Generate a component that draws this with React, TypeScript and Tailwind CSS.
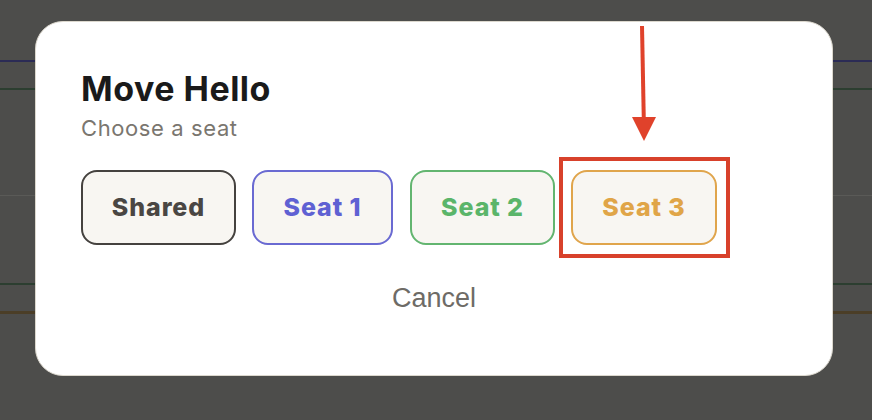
import React from "react";

const seats = [
  { label: "Shared", cls: "w-[155px] border-[#45423f] text-[#4a4643]" },
  { label: "Seat 1", cls: "w-[141px] border-[#6a6ad2] text-[#5f61d3]" },
  { label: "Seat 2", cls: "w-[145px] border-[#63b570] text-[#5bb56a]" },
];

export default function App() {
  return (
    <div className="relative w-[872px] h-[420px] overflow-hidden bg-[#4d4d4b] font-['Inter',sans-serif]">
      {/* background content */}
      <div className="flex flex-col">
        <div className="mt-[60px] h-[2px] bg-[#2b2b55]" />
        <div className="mt-[26px] h-[2px] bg-[#2c3e30]" />
        <div className="mt-[105px] h-px bg-[#5a5a57]" />
        <div className="mt-[87px] h-[2px] bg-[#2c3e30]" />
        <div className="mt-[26px] h-[3px] bg-[#4b3e27]" />
      </div>

      {/* modal */}
      <div className="absolute left-[35px] top-[21px] w-[798px] h-[355px] rounded-[28px] bg-white border border-[#dcd8ce] pl-[45px] pt-[47px] flex flex-col">
        <h1 className="text-[34px] leading-[40px] font-bold text-[#1a1a1a] tracking-[0.5px]">Move Hello</h1>
        <p className="mt-[6px] text-[22px] leading-[26px] text-[#7a766f] tracking-[0.6px]">Choose a seat</p>
        <div className="mt-[29px] flex">
          {seats.map((s, i) => (
            <div
              key={s.label}
              className={`h-[75px] flex items-center justify-center rounded-[16px] border-2 bg-[#f8f6f2] text-[25px] font-extrabold tracking-[0.9px] ${i === 0 ? "" : i === 1 ? "ml-4" : "ml-[17px]"} ${s.cls}`}
            >
              {s.label}
            </div>
          ))}
          <div className="relative ml-4">
            <div className="w-[146px] h-[75px] flex items-center justify-center rounded-[16px] border-2 bg-[#f8f6f2] text-[25px] font-extrabold tracking-[0.9px] border-[#e0a54c] text-[#e0a548]">
              Seat 3
            </div>
            <span className="absolute left-[-12px] right-[-13px] top-[-13px] bottom-[-13px] border-4 border-[#d8412b]" />
            <svg
              className="absolute left-[calc(50%-14px)] top-[-147px]"
              width="30"
              height="122"
              viewBox="0 0 30 122"
            >
              <line x1="12" y1="3" x2="13.8" y2="97" stroke="#e0422b" strokeWidth="4" />
              <polygon points="2,94 26,94 14,118" fill="#e0422b" />
            </svg>
          </div>
        </div>
        <div className="mt-[38px] mr-[45px] flex justify-center">
          <span className="font-['Liberation_Sans',sans-serif] text-[27px] leading-[30px] text-[#6e6b66]">Cancel</span>
        </div>
      </div>
    </div>
  );
}
